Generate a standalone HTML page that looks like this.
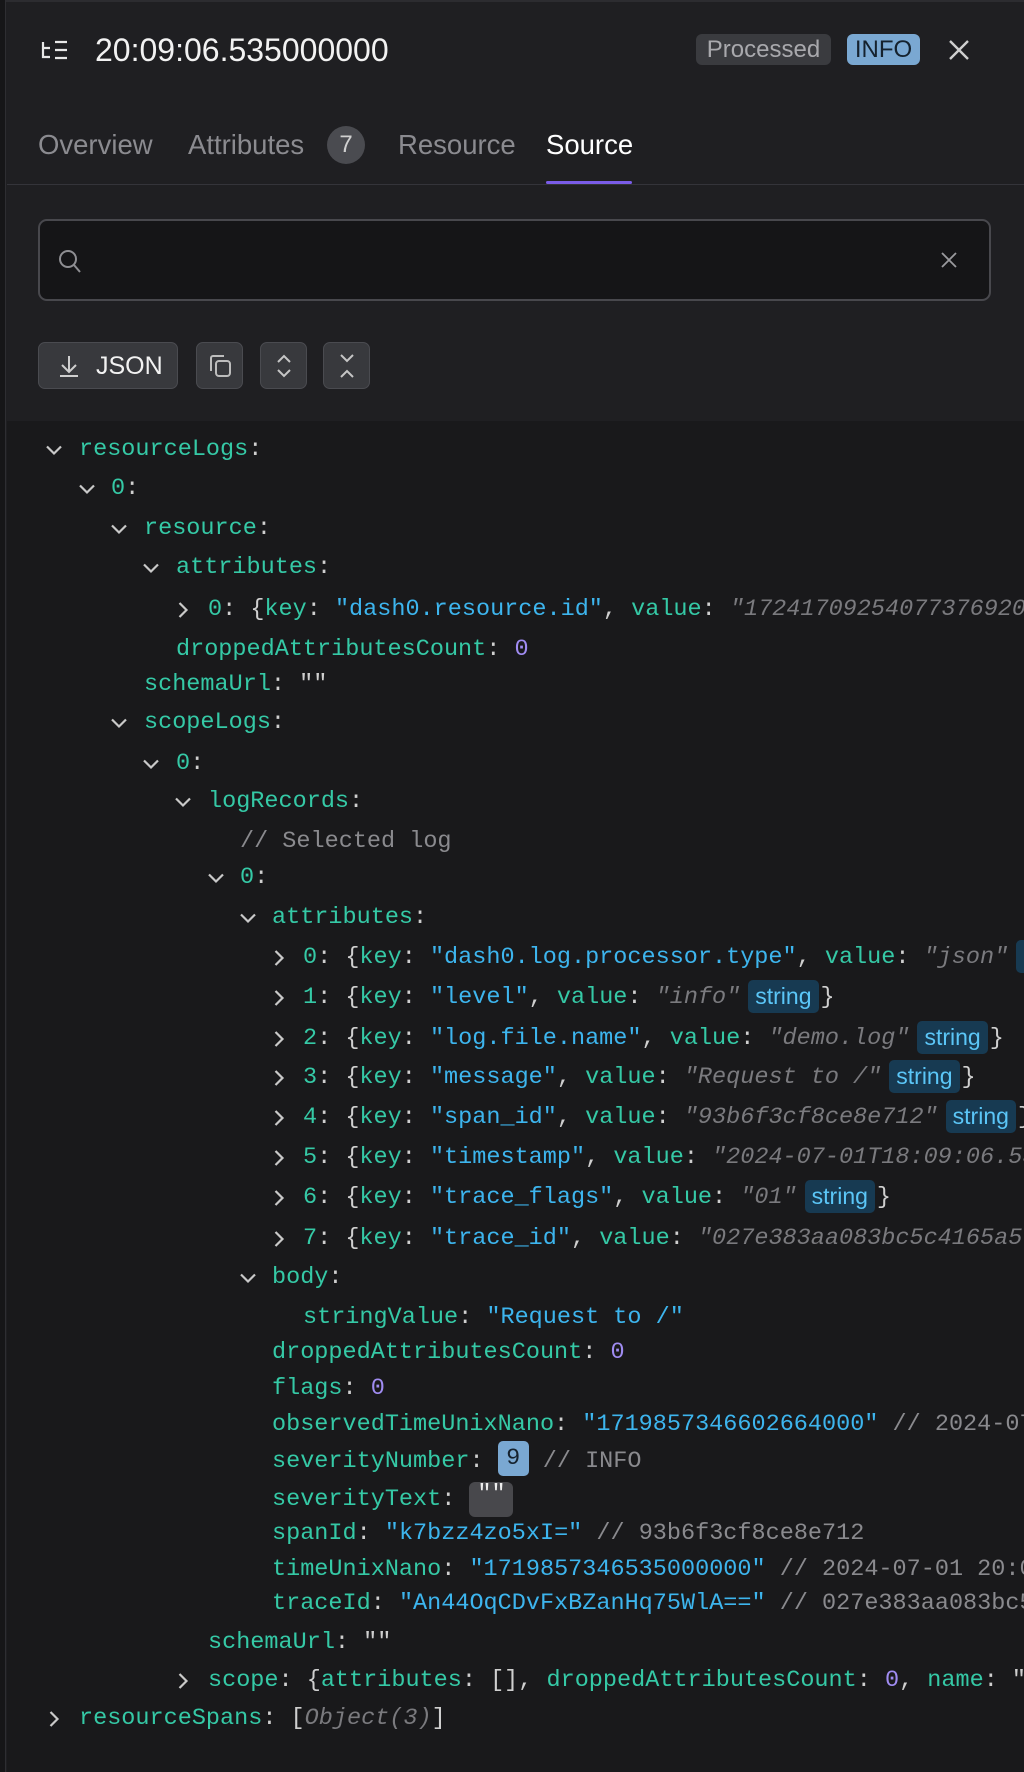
<!DOCTYPE html>
<html><head><meta charset="utf-8">
<style>
*{box-sizing:border-box;margin:0;padding:0}
html,body{width:1024px;height:1772px;overflow:hidden;background:#1f1f22;font-family:"Liberation Sans",sans-serif;position:relative}
.abs{position:absolute}
.edge{left:0;top:0;width:6px;height:1772px;background:#161618;border-right:1px solid #2e2e32}
.topl{left:0;top:0;width:1024px;height:2px;background:#2c2c30}
.title{left:95px;top:31px;color:#f2f2f2;font-size:32px;line-height:38px}
.pill{top:34px;height:31px;border-radius:6px;font-size:24px;line-height:31px;text-align:center}
.tab{top:128px;font-size:27.5px;line-height:34px;color:#8b8b90}
.code{left:7px;top:421px;width:1017px;height:1351px;background:#19191b;overflow:hidden}
.ln{position:absolute;height:40px;line-height:40px;font-family:"Liberation Mono",monospace;font-size:23.5px;white-space:pre;color:#cfcfcf}
.k{color:#35c9a6}.s{color:#3db5ee}.n{color:#a08cf2}.c{color:#8a8a8e}.i{color:#7a7a7e;font-style:italic}
.chev{position:absolute;width:18px;height:18px;top:11px}
.sb{display:inline-block;font-family:"Liberation Sans",sans-serif;font-size:23px;line-height:32px;height:33px;padding:0 7px;background:#173a52;color:#5bc6f7;border-radius:5px;vertical-align:middle;margin:0 2px 0 8px}
.btn{top:342px;height:47px;background:#38393d;border:1px solid #4a4b50;border-radius:7px}
</style></head><body>
<div class="abs topl"></div>
<svg class="abs" style="left:40px;top:38px" width="30" height="24" viewBox="0 0 30 24" fill="none" stroke="#e8e8e8" stroke-width="2.2"><path d="M3 4v15h7M3 10h7M15 4h12M15 12h12M15 20h12"/></svg>
<div class="abs title">20:09:06.535000000</div>
<div class="abs pill" style="left:696px;width:135px;background:#3a3b3f;color:#a9a9ad">Processed</div>
<div class="abs pill" style="left:847px;width:73px;background:#7aa8d2;color:#15222e">INFO</div>
<svg class="abs" style="left:948px;top:39px" width="22" height="22" viewBox="0 0 22 22" stroke="#cfcfcf" stroke-width="2.4"><path d="M2 2L20 20M20 2L2 20"/></svg>
<div class="abs tab" style="left:38px">Overview</div>
<div class="abs tab" style="left:188px">Attributes</div>
<div class="abs" style="left:327px;top:126px;width:38px;height:38px;border-radius:19px;background:#4a4b50;color:#d0d0d0;font-size:24px;line-height:38px;text-align:center">7</div>
<div class="abs tab" style="left:398px">Resource</div>
<div class="abs tab" style="left:546px;color:#fff">Source</div>
<div class="abs" style="left:7px;top:184px;width:1017px;height:1px;background:#34343a"></div>
<div class="abs" style="left:546px;top:181px;width:86px;height:3px;background:#7a5ce8;border-radius:2px"></div>
<div class="abs" style="left:38px;top:219px;width:953px;height:82px;background:#151517;border:2px solid #48484d;border-radius:9px"></div>
<svg class="abs" style="left:58px;top:248px" width="24" height="26" viewBox="0 0 24 26" fill="none" stroke="#8e8e92" stroke-width="2"><circle cx="10" cy="11" r="8"/><path d="M16 17l6 7"/></svg>
<svg class="abs" style="left:941px;top:252px" width="16" height="16" viewBox="0 0 16 16" stroke="#9a9a9e" stroke-width="1.8"><path d="M1 1L15 15M15 1L1 15"/></svg>
<div class="abs btn" style="left:38px;width:140px"></div>
<svg class="abs" style="left:58px;top:354px" width="22" height="24" viewBox="0 0 22 24" fill="none" stroke="#cfcfcf" stroke-width="2"><path d="M11 2v15M4 11l7 7 7-7M2 22h18"/></svg>
<div class="abs" style="left:96px;top:351px;color:#f2f2f2;font-size:25px;line-height:30px">JSON</div>
<div class="abs btn" style="left:196px;width:47px"></div>
<svg class="abs" style="left:207px;top:353px" width="26" height="26" viewBox="0 0 26 26" fill="none" stroke="#bdbdbd" stroke-width="2"><path d="M4 18V5a2 2 0 0 1 2-2h11"/><rect x="9" y="8" width="14" height="15" rx="3"/></svg>
<div class="abs btn" style="left:260px;width:47px"></div>
<svg class="abs" style="left:275px;top:352px" width="18" height="28" viewBox="0 0 18 28" fill="none" stroke="#c6c6c6" stroke-width="2"><path d="M3 10l6-6 6 6M3 18l6 6 6-6"/></svg>
<div class="abs btn" style="left:323px;width:47px"></div>
<svg class="abs" style="left:338px;top:352px" width="18" height="28" viewBox="0 0 18 28" fill="none" stroke="#c6c6c6" stroke-width="2"><path d="M3 3l6 6 6-6M3 25l6-6 6 6"/></svg>
<svg width="0" height="0" style="position:absolute"><defs>
<symbol id="dn" viewBox="0 0 18 18"><path d="M2 5.5l7 7 7-7" fill="none" stroke="#c9c9c9" stroke-width="2.2"/></symbol>
<symbol id="rt" viewBox="0 0 18 18"><path d="M5.5 2l7 7-7 7" fill="none" stroke="#c9c9c9" stroke-width="2.2"/></symbol>
</defs></svg>
<div class="abs code">
<div style="position:absolute;left:-7px;top:-421px;width:1024px;height:1772px">
<div class="ln" style="top:430px;left:79px"><span class="k">resourceLogs</span>:</div>
<svg class="chev" style="left:45px;top:441px"><use href="#dn"/></svg>
<div class="ln" style="top:469px;left:111px"><span class="k">0</span>:</div>
<svg class="chev" style="left:78px;top:480px"><use href="#dn"/></svg>
<div class="ln" style="top:509px;left:144px"><span class="k">resource</span>:</div>
<svg class="chev" style="left:110px;top:520px"><use href="#dn"/></svg>
<div class="ln" style="top:548px;left:176px"><span class="k">attributes</span>:</div>
<svg class="chev" style="left:142px;top:559px"><use href="#dn"/></svg>
<div class="ln" style="top:590px;left:208px"><span class="k">0</span>: {<span class="k">key</span>: <span class="s">"dash0.resource.id"</span>, <span class="k">value</span>: <span class="i">"17241709254077376920"</span></div>
<svg class="chev" style="left:174px;top:601px"><use href="#rt"/></svg>
<div class="ln" style="top:630px;left:176px"><span class="k">droppedAttributesCount</span>: <span class="n">0</span></div>
<div class="ln" style="top:665px;left:144px"><span class="k">schemaUrl</span>: ""</div>
<div class="ln" style="top:703px;left:144px"><span class="k">scopeLogs</span>:</div>
<svg class="chev" style="left:110px;top:714px"><use href="#dn"/></svg>
<div class="ln" style="top:744px;left:176px"><span class="k">0</span>:</div>
<svg class="chev" style="left:142px;top:755px"><use href="#dn"/></svg>
<div class="ln" style="top:782px;left:208px"><span class="k">logRecords</span>:</div>
<svg class="chev" style="left:174px;top:793px"><use href="#dn"/></svg>
<div class="ln" style="top:822px;left:240px"><span class="c">// Selected log</span></div>
<div class="ln" style="top:858px;left:240px"><span class="k">0</span>:</div>
<svg class="chev" style="left:207px;top:869px"><use href="#dn"/></svg>
<div class="ln" style="top:898px;left:272px"><span class="k">attributes</span>:</div>
<svg class="chev" style="left:239px;top:909px"><use href="#dn"/></svg>
<div class="ln" style="top:938px;left:303px"><span class="k">0</span>: {<span class="k">key</span>: <span class="s">"dash0.log.processor.type"</span>, <span class="k">value</span>: <span class="i">"json"</span><span class="sb">string</span>}</div>
<svg class="chev" style="left:270px;top:949px"><use href="#rt"/></svg>
<div class="ln" style="top:978px;left:303px"><span class="k">1</span>: {<span class="k">key</span>: <span class="s">"level"</span>, <span class="k">value</span>: <span class="i">"info"</span><span class="sb">string</span>}</div>
<svg class="chev" style="left:270px;top:989px"><use href="#rt"/></svg>
<div class="ln" style="top:1019px;left:303px"><span class="k">2</span>: {<span class="k">key</span>: <span class="s">"log.file.name"</span>, <span class="k">value</span>: <span class="i">"demo.log"</span><span class="sb">string</span>}</div>
<svg class="chev" style="left:270px;top:1030px"><use href="#rt"/></svg>
<div class="ln" style="top:1058px;left:303px"><span class="k">3</span>: {<span class="k">key</span>: <span class="s">"message"</span>, <span class="k">value</span>: <span class="i">"Request to /"</span><span class="sb">string</span>}</div>
<svg class="chev" style="left:270px;top:1069px"><use href="#rt"/></svg>
<div class="ln" style="top:1098px;left:303px"><span class="k">4</span>: {<span class="k">key</span>: <span class="s">"span_id"</span>, <span class="k">value</span>: <span class="i">"93b6f3cf8ce8e712"</span><span class="sb">string</span>}</div>
<svg class="chev" style="left:270px;top:1109px"><use href="#rt"/></svg>
<div class="ln" style="top:1138px;left:303px"><span class="k">5</span>: {<span class="k">key</span>: <span class="s">"timestamp"</span>, <span class="k">value</span>: <span class="i">"2024-07-01T18:09:06.535Z"</span></div>
<svg class="chev" style="left:270px;top:1149px"><use href="#rt"/></svg>
<div class="ln" style="top:1178px;left:303px"><span class="k">6</span>: {<span class="k">key</span>: <span class="s">"trace_flags"</span>, <span class="k">value</span>: <span class="i">"01"</span><span class="sb">string</span>}</div>
<svg class="chev" style="left:270px;top:1189px"><use href="#rt"/></svg>
<div class="ln" style="top:1219px;left:303px"><span class="k">7</span>: {<span class="k">key</span>: <span class="s">"trace_id"</span>, <span class="k">value</span>: <span class="i">"027e383aa083bc5c4165a5f0"</span></div>
<svg class="chev" style="left:270px;top:1230px"><use href="#rt"/></svg>
<div class="ln" style="top:1258px;left:272px"><span class="k">body</span>:</div>
<svg class="chev" style="left:239px;top:1269px"><use href="#dn"/></svg>
<div class="ln" style="top:1298px;left:303px"><span class="k">stringValue</span>: <span class="s">"Request to /"</span></div>
<div class="ln" style="top:1333px;left:272px"><span class="k">droppedAttributesCount</span>: <span class="n">0</span></div>
<div class="ln" style="top:1369px;left:272px"><span class="k">flags</span>: <span class="n">0</span></div>
<div class="ln" style="top:1405px;left:272px"><span class="k">observedTimeUnixNano</span>: <span class="s">"1719857346602664000"</span> <span class="c">// 2024-07-01 20:09:06</span></div>
<div class="ln" style="top:1442px;left:272px"><span class="k">severityNumber</span>: <span style="display:inline-block;width:31px;height:35px;line-height:35px;text-align:center;background:#7aa8d2;color:#15222e;border-radius:5px;vertical-align:middle;margin-top:-4px">9</span> <span class="c">// INFO</span></div>
<div class="ln" style="top:1480px;left:272px"><span class="k">severityText</span>: <span style="display:inline-block;width:44px;height:35px;line-height:26px;text-align:center;background:#48484c;color:#eee;border-radius:6px;vertical-align:middle;margin-top:2px">""</span></div>
<div class="ln" style="top:1514px;left:272px"><span class="k">spanId</span>: <span class="s">"k7bzz4zo5xI="</span> <span class="c">// 93b6f3cf8ce8e712</span></div>
<div class="ln" style="top:1550px;left:272px"><span class="k">timeUnixNano</span>: <span class="s">"1719857346535000000"</span> <span class="c">// 2024-07-01 20:09:06</span></div>
<div class="ln" style="top:1584px;left:272px"><span class="k">traceId</span>: <span class="s">"An44OqCDvFxBZanHq75WlA=="</span> <span class="c">// 027e383aa083bc5c</span></div>
<div class="ln" style="top:1623px;left:208px"><span class="k">schemaUrl</span>: ""</div>
<div class="ln" style="top:1661px;left:208px"><span class="k">scope</span>: {<span class="k">attributes</span>: [], <span class="k">droppedAttributesCount</span>: <span class="n">0</span>, <span class="k">name</span>: ""}</div>
<svg class="chev" style="left:174px;top:1672px"><use href="#rt"/></svg>
<div class="ln" style="top:1699px;left:79px"><span class="k">resourceSpans</span>: [<span class="i">Object(3)</span>]</div>
<svg class="chev" style="left:45px;top:1710px"><use href="#rt"/></svg>
</div>
</div>
<div class="abs edge"></div>
</body></html>
